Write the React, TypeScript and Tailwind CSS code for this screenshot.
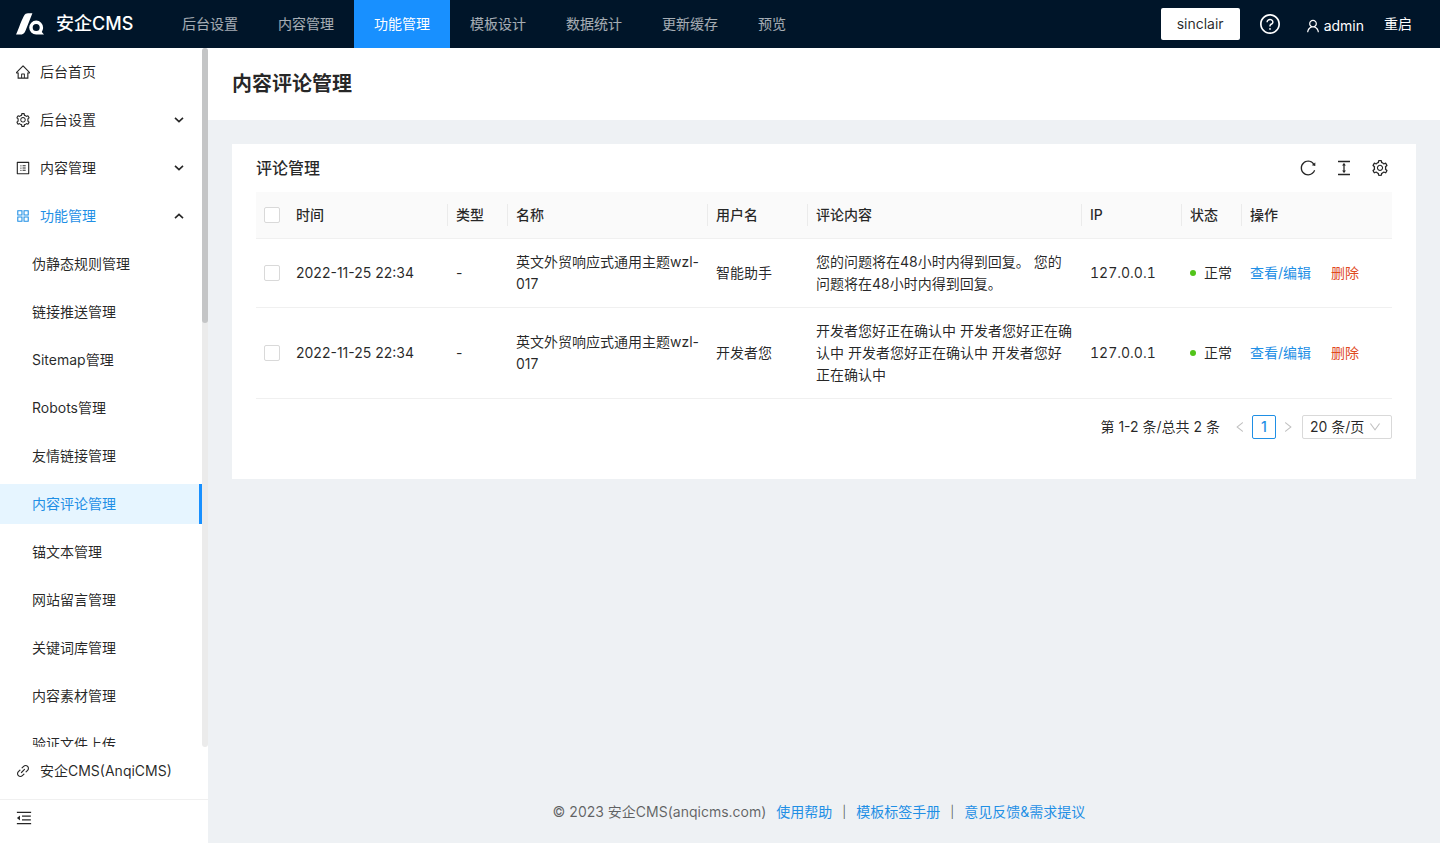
import { useState } from 'react';
import {
  AiOutlineAppstore,
  AiOutlineColumnHeight,
  AiOutlineDown,
  AiOutlineHome,
  AiOutlineLeft,
  AiOutlineLink,
  AiOutlineMenuFold,
  AiOutlineProfile,
  AiOutlineQuestionCircle,
  AiOutlineReload,
  AiOutlineRight,
  AiOutlineSetting,
  AiOutlineUser,
} from 'react-icons/ai';
import type { IconType } from 'react-icons';
import clsx from 'clsx';

const topNav = ['后台设置', '内容管理', '功能管理', '模板设计', '数据统计', '更新缓存', '预览'];

const featureMenu = [
  '伪静态规则管理',
  '链接推送管理',
  'Sitemap管理',
  'Robots管理',
  '友情链接管理',
  '内容评论管理',
  '锚文本管理',
  '网站留言管理',
  '关键词库管理',
  '内容素材管理',
  '验证文件上传',
];

interface Comment {
  id: number;
  time: string;
  type: string;
  title: string;
  user: string;
  content: string;
  ip: string;
}

const comments: Comment[] = [
  {
    id: 2,
    time: '2022-11-25 22:34',
    type: '-',
    title: '英文外贸响应式通用主题wzl-017',
    user: '智能助手',
    content: '您的问题将在48小时内得到回复。 您的问题将在48小时内得到回复。',
    ip: '127.0.0.1',
  },
  {
    id: 1,
    time: '2022-11-25 22:34',
    type: '-',
    title: '英文外贸响应式通用主题wzl-017',
    user: '开发者您',
    content: '开发者您好正在确认中 开发者您好正在确认中 开发者您好正在确认中 开发者您好正在确认中',
    ip: '127.0.0.1',
  },
];

const columns = [
  { title: '时间', width: 'w-40' },
  { title: '类型', width: 'w-[60px]' },
  { title: '名称', width: 'w-[200px]' },
  { title: '用户名', width: 'w-[100px]' },
  { title: '评论内容', width: '' },
  { title: 'IP', width: 'w-[100px]' },
  { title: '状态', width: 'w-[60px]' },
  { title: '操作', width: 'w-[150px]' },
];

export default function App() {
  return (
    <div className="flex min-h-screen flex-col bg-[#eef1f4] font-['Inter','Noto_Sans_CJK_SC',sans-serif] text-sm leading-[22px] text-black/85">
      <TopBar />
      <div className="flex flex-1">
        <Sidebar />
        <div className="flex min-w-0 flex-1 flex-col">
          <div className="bg-white px-6 py-5">
            <h1 className="text-xl leading-8 font-semibold">内容评论管理</h1>
          </div>
          <main className="flex-1 p-6">
            <CommentTable />
          </main>
          <PageFooter />
        </div>
      </div>
    </div>
  );
}

/** Ant icon with the empty margin of its artboard cropped off. */
function Icon({ as: Glyph, className }: { as: IconType; className?: string }) {
  return <Glyph viewBox="64 64 896 896" className={clsx('shrink-0', className)} />;
}

function Logo() {
  return (
    <svg viewBox="0 0 28 22" className="h-[22px] w-7" fill="#fff" aria-hidden="true">
      <path d="M7.600 3.400C9 .8 10.400.2 12 .2H16.400L9.600 17.400C8.400 20.400 6.600 21.600 4 21.600H0C1.800 18 4.800 8.600 7.600 3.400Z" />
      <path
        fillRule="evenodd"
        d="M20.200 7.600a6.900 6.900 0 0 1 6.900 7c0 1.700-.5 3-1.300 4.300l2.200 2.700h-7.800a7 7 0 0 1 0-14Zm0 3.500a3.500 3.500 0 1 0 0 7 3.500 3.500 0 0 0 0-7Z"
      />
    </svg>
  );
}

function TopBar() {
  return (
    <header className="sticky top-0 z-10 flex h-12 shrink-0 items-center bg-[#001529] pr-7 pl-4 text-white">
      <a href="#home" className="flex w-[146px] shrink-0 items-center gap-3">
        <Logo />
        <span className="text-lg font-medium">安企CMS</span>
      </a>
      <nav className="flex h-full flex-1">
        {topNav.map((item) => (
          <a
            key={item}
            href="#nav"
            className={clsx(
              'flex items-center px-5',
              item === '功能管理' ? 'bg-[#1890ff] text-white' : 'text-white/65'
            )}
          >
            {item}
          </a>
        ))}
      </nav>
      <div className="flex items-center gap-5">
        <button type="button" className="h-8 rounded-xs bg-white px-4 text-black/85">
          sinclair
        </button>
        <button type="button" aria-label="帮助">
          <Icon as={AiOutlineQuestionCircle} className="size-5" />
        </button>
        <button type="button" className="flex items-center gap-1 pt-1 pl-1.5">
          <Icon as={AiOutlineUser} className="size-3.5" />
          admin
        </button>
        <button type="button">重启</button>
      </div>
    </header>
  );
}

function Chevron({ open }: { open?: boolean }) {
  return (
    <svg
      viewBox="0 0 10 6"
      className={clsx('ml-auto h-1.5 w-2.5', open && 'rotate-180')}
      fill="none"
      stroke="#262626"
      strokeWidth="1.600"
      aria-hidden="true"
    >
      <path d="M1 .8 5 4.600 9 .8" />
    </svg>
  );
}

function MenuGroup({
  icon,
  label,
  expandable,
  open,
}: {
  icon: IconType;
  label: string;
  expandable?: boolean;
  open?: boolean;
}) {
  return (
    <a href="#menu" className="flex h-10 shrink-0 items-center gap-2.5 pr-[18px] pl-4">
      <Icon as={icon} className={clsx('size-3.5', open && 'text-[#1f8fe5]')} />
      <span className={clsx(open && 'text-[#1f8fe5]')}>{label}</span>
      {expandable && <Chevron open={open} />}
    </a>
  );
}

function Sidebar() {
  return (
    <aside className="sticky top-12 flex h-[calc(100vh-48px)] w-52 shrink-0 flex-col bg-white">
      <div className="flex min-h-0 flex-1">
        <nav className="flex flex-1 flex-col gap-2 overflow-hidden pt-1">
          <MenuGroup icon={AiOutlineHome} label="后台首页" />
          <MenuGroup icon={AiOutlineSetting} label="后台设置" expandable />
          <MenuGroup icon={AiOutlineProfile} label="内容管理" expandable />
          <MenuGroup icon={AiOutlineAppstore} label="功能管理" expandable open />
          {featureMenu.map((item) => (
            <a
              key={item}
              href="#feature"
              className={clsx(
                'flex h-10 shrink-0 items-center pl-8',
                item === '内容评论管理' && 'border-r-3 border-[#1890ff] bg-[#e6f5ff] text-[#1f8fe5]'
              )}
            >
              {item}
            </a>
          ))}
        </nav>
        {/* Scroll rail */}
        <div className="w-1.5 rounded-sm bg-[#ebebeb]">
          <div className="h-[275px] rounded-sm bg-[#c4c5c6]" />
        </div>
      </div>
      <div className="py-1">
        <MenuGroup icon={AiOutlineLink} label="安企CMS(AnqiCMS)" />
      </div>
      <div className="mt-1 border-t border-[#f0f0f0] px-4 pt-2.5 pb-[17px]">
        <button type="button" aria-label="收起菜单" className="block">
          <Icon as={AiOutlineMenuFold} className="size-4" />
        </button>
      </div>
    </aside>
  );
}

function Checkbox({
  label,
  checked,
  onChange,
}: {
  label: string;
  checked: boolean;
  onChange: () => void;
}) {
  return (
    <input
      type="checkbox"
      aria-label={label}
      checked={checked}
      onChange={onChange}
      className="block size-4 appearance-none rounded-xs border border-[#d9d9d9] bg-white checked:border-[#1f8fe5] checked:bg-[#1f8fe5]"
    />
  );
}

function CommentTable() {
  const [selected, setSelected] = useState<number[]>([]);
  const allSelected = selected.length === comments.length;

  const toggle = (id: number) =>
    setSelected((prev) => (prev.includes(id) ? prev.filter((x) => x !== id) : [...prev, id]));

  return (
    <section className="bg-white px-6 pb-10">
      <div className="flex h-12 items-center justify-between">
        <h2 className="text-base font-medium">评论管理</h2>
        <div className="flex gap-5 pr-1">
          <button type="button" aria-label="刷新">
            <Icon as={AiOutlineReload} className="size-4" />
          </button>
          <button type="button" aria-label="密度">
            <Icon as={AiOutlineColumnHeight} className="size-4" />
          </button>
          <button type="button" aria-label="列设置">
            <Icon as={AiOutlineSetting} className="size-4" />
          </button>
        </div>
      </div>

      <table className="w-full table-fixed border-separate border-spacing-0 text-left">
        <thead>
          <tr className="bg-[#fafafa]">
            <th className="w-8 border-b border-[#f0f0f0] px-2 py-3">
              <Checkbox
                label="全选"
                checked={allSelected}
                onChange={() => setSelected(allSelected ? [] : comments.map((c) => c.id))}
              />
            </th>
            {columns.map((col, i) => (
              <th
                key={col.title}
                className={clsx('border-b border-[#f0f0f0] py-3 pl-2 font-medium', col.width)}
              >
                <div className={clsx(i < columns.length - 1 && 'border-r border-[#ebebeb]')}>
                  {col.title}
                </div>
              </th>
            ))}
          </tr>
        </thead>
        <tbody>
          {comments.map((row) => (
            <tr key={row.id} className="*:border-b *:border-[#f0f0f0] *:px-2 *:py-3">
              <td>
                <Checkbox
                  label={`选择 ${row.user}`}
                  checked={selected.includes(row.id)}
                  onChange={() => toggle(row.id)}
                />
              </td>
              <td>{row.time}</td>
              <td>{row.type}</td>
              <td className="break-all">{row.title}</td>
              <td>{row.user}</td>
              <td>{row.content}</td>
              <td className="tabular-nums">{row.ip}</td>
              <td>
                <span className="flex items-center gap-2 whitespace-nowrap">
                  <span className="size-1.5 shrink-0 rounded-full bg-[#52c41a]" />
                  正常
                </span>
              </td>
              <td>
                <div className="flex gap-5 whitespace-nowrap">
                  <a href="#edit" className="text-[#1f8fe5]">
                    查看/编辑
                  </a>
                  <a href="#delete" className="text-[#e0491f]">
                    删除
                  </a>
                </div>
              </td>
            </tr>
          ))}
        </tbody>
      </table>

      <Pagination />
    </section>
  );
}

function Pagination() {
  return (
    <div className="mt-4 flex h-6 items-center justify-end">
      <span className="mr-2">第 1-2 条/总共 2 条</span>
      <button
        type="button"
        disabled
        aria-label="上一页"
        className="flex size-6 items-center justify-center text-black/25"
      >
        <Icon as={AiOutlineLeft} className="size-3" />
      </button>
      <button
        type="button"
        className="size-6 rounded-xs border border-[#1f8fe5] text-center font-medium text-[#1f8fe5]"
      >
        1
      </button>
      <button
        type="button"
        disabled
        aria-label="下一页"
        className="flex size-6 items-center justify-center text-black/25"
      >
        <Icon as={AiOutlineRight} className="size-3" />
      </button>
      <div className="relative ml-0.5">
        <select
          aria-label="每页条数"
          className="block h-6 w-[90px] appearance-none rounded-xs border border-[#d9d9d9] bg-white pl-[7px]"
        >
          <option>20 条/页</option>
          <option>50 条/页</option>
          <option>100 条/页</option>
        </select>
        <Icon
          as={AiOutlineDown}
          className="pointer-events-none absolute top-1.5 right-[11px] size-3 text-black/25"
        />
      </div>
    </div>
  );
}

function PageFooter() {
  return (
    <footer className="flex items-center justify-center gap-2.5 pt-4 pr-2.5 pb-5 text-black/60">
      <span>© 2023 安企CMS(anqicms.com)</span>
      <a href="#help" className="text-[#1f8fe5]">
        使用帮助
      </a>
      <span className="text-xs">|</span>
      <a href="#tags" className="text-[#1f8fe5]">
        模板标签手册
      </a>
      <span className="text-xs">|</span>
      <a href="#feedback" className="text-[#1f8fe5]">
        意见反馈&需求提议
      </a>
    </footer>
  );
}
